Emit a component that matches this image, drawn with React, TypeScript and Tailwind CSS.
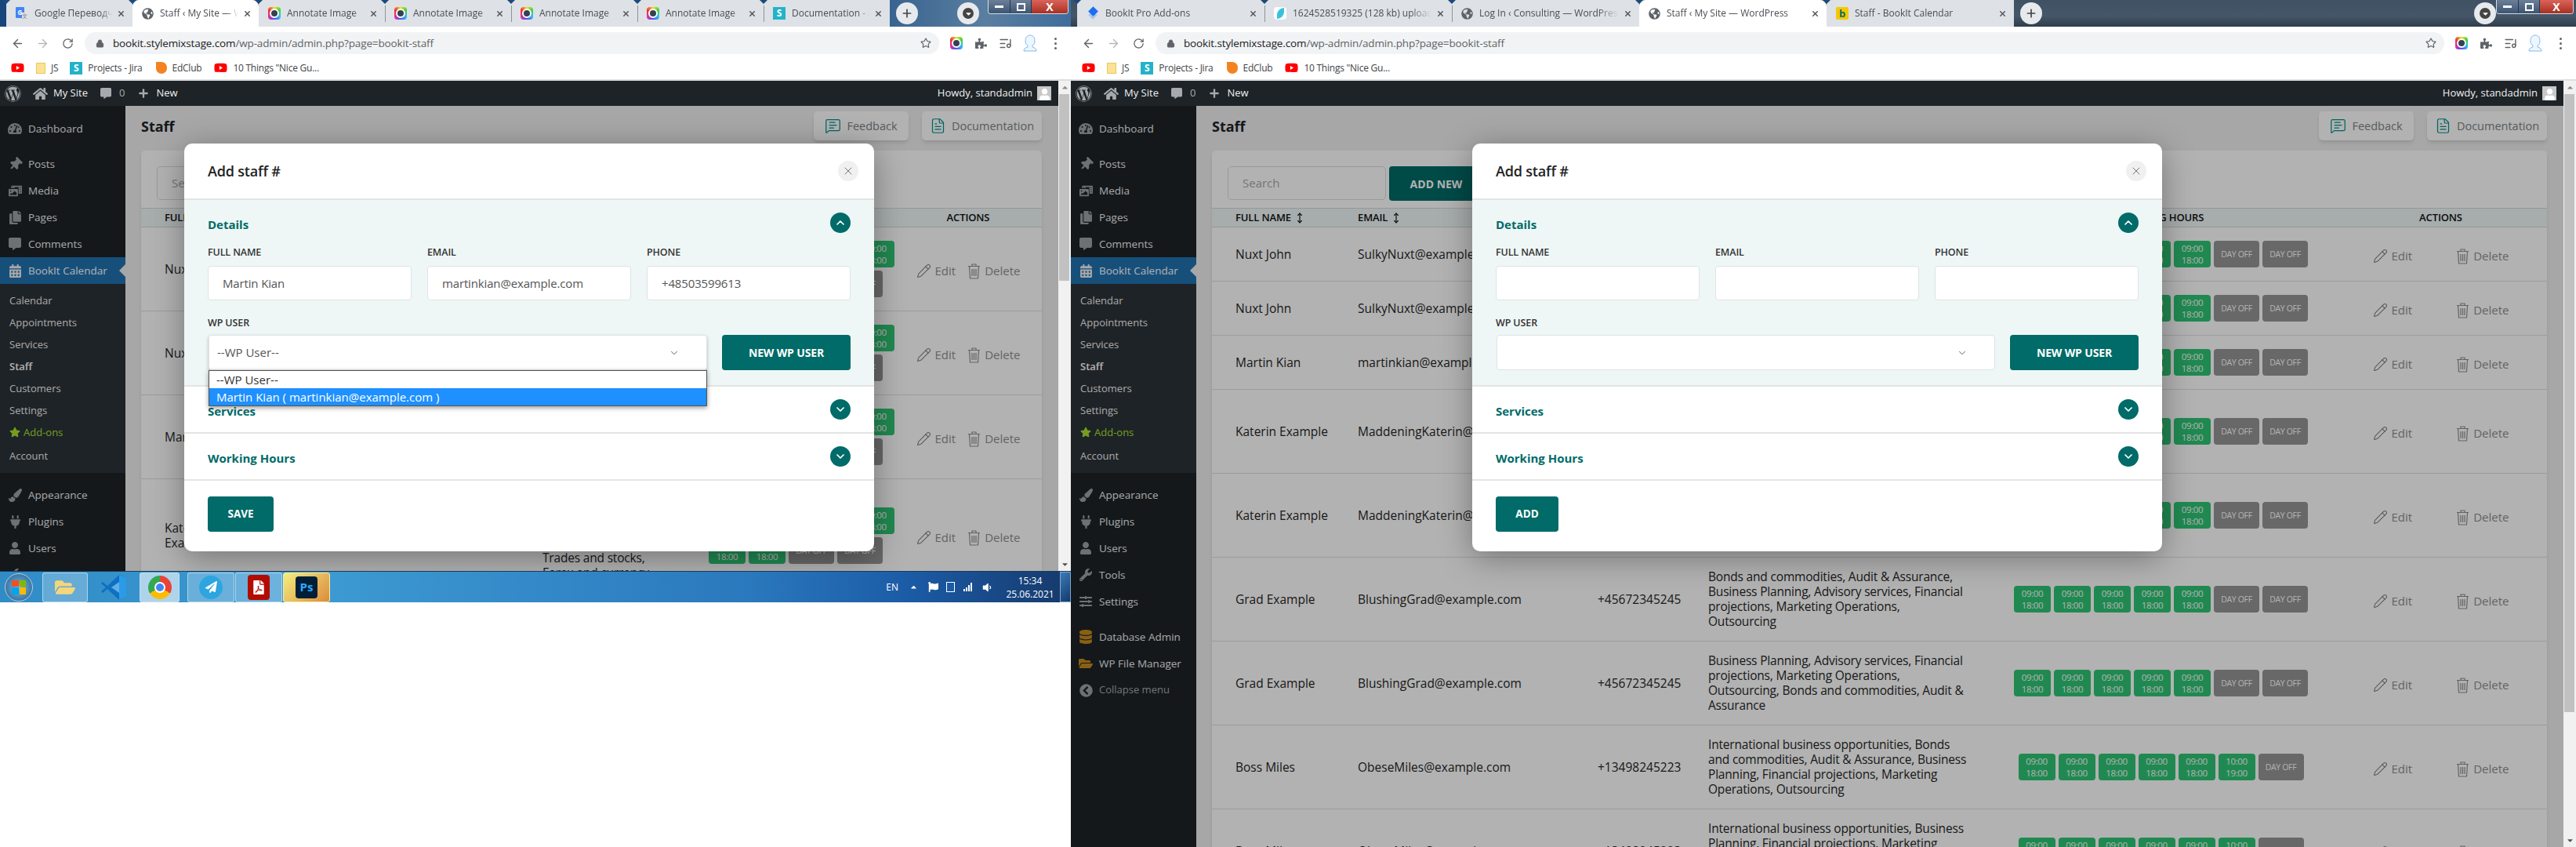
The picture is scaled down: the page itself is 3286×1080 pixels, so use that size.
import React from "react";
import { ArrowLeft, ArrowRight, RotateCw, Lock, Star, ListMusic, X, ChevronDown, ChevronUp, Plus, MessageSquareText, FileText, Pencil, MoveVertical } from "lucide-react";
import { FaWordpress, FaHome, FaCommentAlt, FaPuzzlePiece, FaGlobeAmericas, FaTachometerAlt, FaThumbtack, FaPhotoVideo, FaCopy, FaCalendarAlt, FaStar, FaPaintBrush, FaPlug, FaUser, FaWrench, FaSlidersH, FaDatabase, FaFolderOpen, FaChevronCircleLeft, FaCaretDown, FaYoutube, FaPaperPlane, FaFilePdf, FaFlag, FaVolumeDown, FaCaretUp } from "react-icons/fa";

const Annotate = ({ s = 16 }: { s?: number }) => (
  <span style={{ width: s, height: s }} className="flex shrink-0 items-center justify-center rounded-[4px] bg-[conic-gradient(#f0e030,#40d040,#30c0f0,#5050f0,#e030a0,#f03030,#f0e030)]">
    <span className="h-[70%] w-[70%] rounded-full border-2 border-white bg-[#33424f]" />
  </span>
);

const SJira = () => (
  <span className="flex h-4 w-4 shrink-0 items-center justify-center bg-[#22b3c9] text-[12px] font-bold leading-none text-white">S</span>
);

const GTranslate = () => (
  <span className="relative flex h-4 w-4 shrink-0">
    <span className="flex h-[14px] w-[11px] items-center justify-center rounded-[1px] bg-[#4285f4] text-[8px] font-bold text-white">G</span>
    <span className="absolute bottom-0 right-0 h-[9px] w-[8px] bg-[#dde0e4] text-[7px] leading-[9px] text-[#777]">文</span>
  </span>
);

const Diamond = () => (
  <span className="relative flex h-4 w-4 shrink-0 items-center justify-center">
    <span className="absolute top-[6px] h-[8px] w-[8px] rotate-45 bg-[#a9c4ec]" />
    <span className="absolute top-[1px] h-[9px] w-[9px] rotate-45 bg-[#1a6ef0]" />
  </span>
);

const Bird = () => (
  <span className="flex h-4 w-4 shrink-0 items-center justify-center rounded-sm bg-white">
    <span className="h-[14px] w-[9px] rounded-tl-full rounded-br-full bg-[#35c3dc]" />
  </span>
);

const BookitFav = () => (
  <span className="flex h-4 w-4 shrink-0 items-center justify-center rounded-[2px] bg-[#f5c800] text-[13px] font-bold leading-none text-[#0b6e62]">b</span>
);

const Globe = () => <FaGlobeAmericas size={15} className="shrink-0 text-[#5f6368]" />;

const Avatar = () => (
  <svg width="18" height="22" viewBox="0 0 18 22" fill="#eef6fd" stroke="#7dbcf0" strokeWidth="1" className="ml-[14px] shrink-0">
    <path d="M1 21c0-3 2-4 5-5v-2c-2-1-3-3-3-6 0-4 2-7 6-7s6 3 6 7c0 3-1 5-3 6v2c3 1 5 2 5 5z" />
  </svg>
);

type TabData = { icon: React.ReactNode; title: string; active?: boolean };

function Tab({ tab, wide, sep }: { tab: TabData; wide: boolean; sep: boolean }) {
  return (
    <div className={`relative flex h-full shrink-0 items-center ${wide ? "w-[239px]" : "w-[161px]"} ${tab.active ? "rounded-t-lg bg-white" : "bg-[#dee1e6]"} pl-[12px] pr-[9px]`}>
      {sep && !tab.active && <span className="absolute left-0 top-[7px] h-[21px] w-px bg-[#8f9296]" />}
      <span className="absolute -left-[5px] top-0 z-10 h-0 w-0 border-x-[5px] border-t-[5px] border-x-transparent border-t-[#1d4a7d]" />
      {tab.icon}
      <span className="ml-[8px] min-w-0 flex-1 overflow-hidden whitespace-nowrap text-[12px] leading-[34px] text-[#4a4d52] [mask-image:linear-gradient(90deg,#000_85%,transparent)]">{tab.title}</span>
      <X size={11} strokeWidth={3.2} className="ml-[6px] shrink-0 text-[#54575b]" />
    </div>
  );
}

function WinControls() {
  return (
    <div className="ml-auto mr-[3px] flex h-[18px] w-[103px] self-start overflow-hidden rounded-b-[4px] border border-t-0 border-[#d5dde6]">
      <div className="flex w-[28px] items-center justify-center border-r border-[#26384e] bg-[linear-gradient(180deg,#6c7f98,#3d5573)]"><span className="h-[3px] w-[11px] bg-white" /></div>
      <div className="flex w-[27px] items-center justify-center border-r border-[#26384e] bg-[linear-gradient(180deg,#6c7f98,#3d5573)]"><span className="h-[10px] w-[11px] border-2 border-white" /></div>
      <div className="flex flex-1 items-center justify-center bg-[linear-gradient(180deg,#d9635a,#a92f22)] text-[14px] font-bold leading-none text-white">X</div>
    </div>
  );
}

function TabStrip({ tabs, wide }: { tabs: TabData[]; wide: boolean }) {
  return (
    <div className={`flex h-[34px] shrink-0 items-center ${wide ? "bg-[linear-gradient(180deg,#3f5163_0%,#445668_60%,#2f3e4c_100%)] pl-[8px]" : "bg-[linear-gradient(90deg,#16467a_0%,#1b4c80_75%,#5a7ea0_92%,#3f6d9b_100%)] pl-[8px]"}`}>
      {tabs.map((t, i) => <Tab key={i} tab={t} wide={wide} sep={i > 0 && !tabs[i - 1].active} />)}
      <div className="ml-[8px] flex h-[28px] w-[28px] shrink-0 items-center justify-center rounded-full bg-[#e7eaed]"><Plus size={16} strokeWidth={2.5} className="text-[#444]" /></div>
      <div className={`${wide ? "ml-[551px]" : "ml-[50px]"} flex h-[28px] w-[28px] shrink-0 items-center justify-center rounded-full bg-[#e7eaed]`}>
        <span className="flex h-[14px] w-[14px] items-center justify-center rounded-full bg-[#444]"><FaCaretDown size={11} className="text-white" /></span>
      </div>
      <WinControls />
    </div>
  );
}

function Toolbar() {
  return (
    <div className="flex h-[38px] shrink-0 items-center bg-white pl-[14px] pr-[18px] pt-[4px]">
      <ArrowLeft size={17} className="shrink-0 text-[#5f6368]" />
      <ArrowRight size={17} className="ml-[15px] shrink-0 text-[#b5b8bb]" />
      <RotateCw size={15} className="ml-[16px] shrink-0 text-[#5f6368]" />
      <div className="ml-[14px] flex h-[28px] flex-1 items-center rounded-full bg-[#f1f3f4] pl-[14px] pr-[10px]">
        <Lock size={11} fill="#5f6368" className="shrink-0 text-[#5f6368]" />
        <span className="ml-[11px] whitespace-nowrap text-[13.5px] tracking-[-0.01em] text-[#202124]">bookit.stylemixstage.com<span className="text-[#5f6368]">/wp-admin/admin.php?page=bookit-staff</span></span>
        <Star size={14} className="ml-auto shrink-0 text-[#5f6368]" />
      </div>
      <span className="ml-[14px]"><Annotate /></span>
      <FaPuzzlePiece size={15} className="ml-[16px] shrink-0 text-[#5f6368]" />
      <ListMusic size={17} className="ml-[15px] shrink-0 text-[#5f6368]" />
      <Avatar />
      <span className="ml-[22px] flex flex-col gap-[3px]">
        <span className="h-[3px] w-[3px] rounded-full bg-[#5f6368]" />
        <span className="h-[3px] w-[3px] rounded-full bg-[#5f6368]" />
        <span className="h-[3px] w-[3px] rounded-full bg-[#5f6368]" />
      </span>
    </div>
  );
}

function Bookmarks() {
  const t = "ml-[7px] whitespace-nowrap text-[12px] tracking-[-0.02em] text-[#404346]";
  return (
    <div className="flex h-[31px] shrink-0 items-center border-b-2 border-[#dcdfe2] bg-white pl-[14px]">
      <FaYoutube size={17} className="shrink-0 text-[#f00]" />
      <span className="ml-[15px] h-[14px] w-[12px] shrink-0 border border-[#e8c860] bg-[#fde293]" />
      <span className={t}>JS</span>
      <span className="ml-[15px]"><SJira /></span>
      <span className={t}>Projects - Jira</span>
      <span className="ml-[17px] h-[15px] w-[14px] shrink-0 rounded-b-full rounded-tr-full bg-[#f58220]" />
      <span className={t}>EdClub</span>
      <FaYoutube size={17} className="ml-[16px] shrink-0 text-[#f00]" />
      <span className={t}>10 Things "Nice Gu...</span>
    </div>
  );
}

function AdminBar() {
  return (
    <div className="relative z-0 flex h-8 shrink-0 items-center bg-[#1d2327] pr-[9px] text-[13px] text-[#f0f0f1]">
      <FaWordpress size={21} className="ml-[6px] shrink-0 text-[#a7aaad]" />
      <FaHome size={19} className="ml-[15px] shrink-0 text-[#a7aaad]" />
      <span className="ml-[7px] whitespace-nowrap">My Site</span>
      <FaCommentAlt size={14} className="ml-[16px] shrink-0 text-[#a7aaad]" />
      <span className="ml-[10px] text-[#a7aaad]">0</span>
      <Plus size={16} strokeWidth={3.5} className="ml-[16px] shrink-0 text-[#a7aaad]" />
      <span className="ml-[8px]">New</span>
      <span className="ml-auto whitespace-nowrap">Howdy, standadmin</span>
      <span className="ml-[6px] flex h-[18px] w-[18px] items-end justify-center overflow-hidden bg-[#c8c8c8]"><FaUser size={15} className="text-white" /></span>
    </div>
  );
}

const icon = "shrink-0 text-[#9ca2a7]";
const top1 = [
  { l: "Dashboard", i: <FaTachometerAlt size={18} className={icon} /> },
];
const top2 = [
  { l: "Posts", i: <FaThumbtack size={17} className={`${icon} rotate-45`} /> },
  { l: "Media", i: <FaPhotoVideo size={17} className={icon} /> },
  { l: "Pages", i: <FaCopy size={17} className={icon} /> },
  { l: "Comments", i: <FaCommentAlt size={16} className={icon} /> },
];
const top3 = [
  { l: "Appearance", i: <FaPaintBrush size={17} className={icon} /> },
  { l: "Plugins", i: <FaPlug size={17} className={icon} /> },
  { l: "Users", i: <FaUser size={16} className={icon} /> },
  { l: "Tools", i: <FaWrench size={16} className={icon} /> },
  { l: "Settings", i: <FaSlidersH size={16} className={icon} /> },
];

function MenuItem({ l, i }: { l: string; i: React.ReactNode }) {
  return (
    <div className="flex h-[34px] shrink-0 items-center pl-[9px] text-[13.5px] text-[#f0f0f1]">
      <span className="flex w-[20px] shrink-0 justify-center">{i}</span>
      <span className="ml-[7px] whitespace-nowrap">{l}</span>
    </div>
  );
}

function Sidebar() {
  const sub = ["Calendar", "Appointments", "Services"];
  return (
    <div className="flex w-40 shrink-0 flex-col overflow-hidden bg-[#1d2327] pt-[12px]">
      {top1.map((m) => <MenuItem key={m.l} {...m} />)}
      <div className="h-[11px] shrink-0" />
      {top2.map((m) => <MenuItem key={m.l} {...m} />)}
      <div className="relative flex h-[34px] shrink-0 items-center bg-[#2271b1] pl-[9px] text-[13.5px] text-white">
        <span className="flex w-[20px] justify-center"><FaCalendarAlt size={17} className="text-[#f0f0f1]" /></span>
        <span className="ml-[7px] whitespace-nowrap">BookIt Calendar</span>
        <span className="absolute right-0 top-[9px] h-0 w-0 border-y-[8px] border-r-[8px] border-y-transparent border-r-[#f0f0f1]" />
      </div>
      <div className="flex h-[241px] shrink-0 flex-col bg-[#2c3338] pl-[12px] pt-[7px] text-[13px] leading-[28px] text-[#f0f0f1]">
        {sub.map((s) => <div key={s} className="h-[28px]">{s}</div>)}
        <div className="h-[28px] font-semibold text-white">Staff</div>
        <div className="h-[28px]">Customers</div>
        <div className="h-[28px]">Settings</div>
        <div className="flex h-[28px] items-center text-[#a8e02e]"><FaStar size={14} className="mr-[4px]" />Add-ons</div>
        <div className="mt-[2px] h-[28px]">Account</div>
      </div>
      <div className="h-[11px] shrink-0" />
      {top3.map((m) => <MenuItem key={m.l} {...m} />)}
      <div className="h-[11px] shrink-0" />
      <MenuItem l="Database Admin" i={<FaDatabase size={18} className="shrink-0 text-[#c48a1c]" />} />
      <MenuItem l="WP File Manager" i={<FaFolderOpen size={18} className="shrink-0 text-[#c48a1c]" />} />
      <div className="flex h-[34px] shrink-0 items-center pl-[9px] text-[13px] text-[#a7aaad]">
        <span className="flex w-[20px] shrink-0 justify-center"><FaChevronCircleLeft size={17} className="text-[#9ca2a7]" /></span>
        <span className="ml-[7px] whitespace-nowrap">Collapse menu</span>
      </div>
    </div>
  );
}

const Green = ({ a = "09:00", b = "18:00" }: { a?: string; b?: string }) => (
  <div className="flex h-[34px] w-[47px] shrink-0 flex-col items-center justify-center rounded-[4px] bg-[#2fc575] text-[11.5px] leading-[15px] tracking-[-0.03em] text-white"><span>{a}</span><span>{b}</span></div>
);
const Off = () => (
  <div className="flex h-[34px] w-[58px] shrink-0 items-center justify-center rounded-[4px] bg-[#959595] text-[10.5px] tracking-[-0.03em] text-white">DAY OFF</div>
);

const Trash = () => (
  <svg width="17" height="21" viewBox="0 0 17 21" fill="none" stroke="#8f8f8f" strokeWidth="1.2" className="shrink-0">
    <path d="M1 4.500h15M6 4.500V2h5v2.500M2.500 4.500 3.500 20h10l1-15.500M6 8v9M8.500 8v9M11 8v9" />
  </svg>
);

type RowD = { name: string; email: string; phone: string; svc: string; six?: boolean };

function Row({ r, cols, narrow }: { r: RowD; cols: string; narrow: boolean }) {
  return (
    <div className={`grid ${cols} items-center border-b border-[#e0e0e0] py-[15px] pl-[30px] text-[15.5px] leading-[19px] text-[#262626]`}>
      <div className="pr-[10px]">{r.name}</div>
      <div className="truncate">{r.email}</div>
      <div>{r.phone}</div>
      <div className="overflow-hidden whitespace-pre tracking-[-0.012em]">{r.svc}</div>
      <div className="flex flex-wrap justify-center gap-[4px]">
        {narrow && <><Green /><Green /></>}
        <Green /><Green /><Green /><Green /><Green />
        {r.six ? <><Green a="10:00" b="19:00" /><Off /></> : <><Off /><Off /></>}
      </div>
      <div className={`flex items-center justify-center ${narrow ? "gap-[15px]" : "gap-[56px]"} pt-[4px] text-[15px] text-[#8f8f8f]`}>
        <span className="flex items-center gap-[5px]"><Pencil size={19} strokeWidth={1.3} className="shrink-0 text-[#7d7d7d]" />Edit</span>
        <span className="flex items-center gap-[5px]"><Trash />Delete</span>
      </div>
    </div>
  );
}

const rowsData: RowD[] = [
  { name: "Nuxt John", email: "SulkyNuxt@example.com", phone: "+45672345245", svc: "Bonds and commodities,\nAudit & Assurance" },
  { name: "Nuxt John", email: "SulkyNuxt@example.com", phone: "+45672345245", svc: "Advisory services,\nFinancial projections" },
  { name: "Martin Kian", email: "martinkian@example.com", phone: "+48503599613", svc: "Business Planning,\nAdvisory services" },
  { name: "Katerin Example", email: "MaddeningKaterin@example.com", phone: "+13498245223", svc: "Bonds and commodities, Audit & Assurance,\nBusiness Planning, Advisory services, Financial\nprojections, Marketing Operations,\nOutsourcing" },
  { name: "Katerin Example", email: "MaddeningKaterin@example.com", phone: "+13498245223", svc: "Business Planning, Advisory services, Financial\nprojections, Marketing Operations,\nOutsourcing, Bonds and commodities, Audit &\nAssurance" },
  { name: "Grad Example", email: "BlushingGrad@example.com", phone: "+45672345245", svc: "Bonds and commodities, Audit & Assurance,\nBusiness Planning, Advisory services, Financial\nprojections, Marketing Operations,\nOutsourcing" },
  { name: "Grad Example", email: "BlushingGrad@example.com", phone: "+45672345245", svc: "Business Planning, Advisory services, Financial\nprojections, Marketing Operations,\nOutsourcing, Bonds and commodities, Audit &\nAssurance" },
  { name: "Boss Miles", email: "ObeseMiles@example.com", phone: "+13498245223", svc: "International business opportunities, Bonds\nand commodities, Audit & Assurance, Business\nPlanning, Financial projections, Marketing\nOperations, Outsourcing", six: true },
  { name: "Boss Miles", email: "ObeseMiles@example.com", phone: "+13498245223", svc: "International business opportunities, Business\nPlanning, Financial projections, Marketing\nOperations, Outsourcing,\nAudit & Assurance", six: true },
];

const leftRows: RowD[] = [
  { name: "Nuxt John", email: "SulkyNuxt@example.com", phone: "+45672345245", svc: "Bonds and commodities,\nAudit & Assurance,\nBusiness Planning,\nAdvisory services" },
  { name: "Nuxt John", email: "SulkyNuxt@example.com", phone: "+45672345245", svc: "Advisory services,\nFinancial projections,\nAudit & Assurance,\nOutsourcing" },
  { name: "Martin Kian", email: "martinkian@example.com", phone: "+48503599613", svc: "Business Planning,\nAdvisory services,\nOutsourcing,\nMarketing Operations" },
  { name: "Katerin Example", email: "MaddeningKaterin@example.com", phone: "+13498245223", svc: "Bonds and commodities,\nAudit & Assurance,\nBusiness Planning,\nAdvisory services,\nTrades and stocks,\nForex and currency" },
];

function Main({ narrow }: { narrow: boolean }) {
  const cols = narrow ? "grid-cols-[120px_220px_142px_193px_260px_180px]" : "grid-cols-[156px_306px_141px_350px_455px_259px]";
  const rows = narrow ? leftRows : rowsData;
  const hd = "flex items-center gap-[4px] whitespace-nowrap";
  return (
    <div className="min-w-0 flex-1 bg-[#f0f0f1] pl-[20px] pr-[21px]">
      <div className="flex h-[44px] items-start justify-between pt-[7px]">
        <div className="pt-[7px] text-[18px] font-bold leading-[24px] text-[#1d2327]">Staff</div>
        <div className="flex gap-[17px]">
          <div className="flex h-[37px] w-[121px] items-center justify-center gap-[7px] rounded-[5px] bg-white text-[14.5px] text-[#7d8487] shadow-md"><MessageSquareText size={21} strokeWidth={1.4} className="text-[#008f8a]" />Feedback</div>
          <div className="flex h-[37px] w-[153px] items-center justify-center gap-[7px] rounded-[5px] bg-white text-[14.5px] text-[#7d8487] shadow-md"><FileText size={21} strokeWidth={1.4} className="text-[#008f8a]" />Documentation</div>
        </div>
      </div>
      <div className="mt-[13px] overflow-hidden rounded-t-[5px] bg-white shadow-md">
        <div className="flex h-[73px] items-start gap-[4px] pl-[20px] pt-[20px]">
          <div className="flex h-[43px] w-[202px] items-center rounded-[5px] border border-[#dcdcdc] pl-[18px] text-[15px] text-[#a9a9a9]">Search</div>
          <div className="flex h-[44px] w-[120px] items-center justify-center rounded-[4px] bg-[#006b68] text-[14px] font-bold text-white">ADD NEW</div>
        </div>
        <div className={`grid ${cols} h-[25px] items-center border-y border-[#d3d8d8] bg-[#eff7f6] pl-[30px] text-[13px] font-semibold tracking-[-0.01em] text-[#111]`}>
          <div className={hd}>FULL NAME <MoveVertical size={14} /></div>
          <div className={hd}>EMAIL <MoveVertical size={14} /></div>
          <div className={hd}>PHONE</div>
          <div className={hd}>SERVICES</div>
          <div className={`${hd} justify-center`}>WORKING HOURS</div>
          <div className={`${hd} justify-center`}>ACTIONS</div>
        </div>
        {rows.map((r, i) => <Row key={i} r={r} cols={cols} narrow={narrow} />)}
      </div>
    </div>
  );
}

function Toggle({ up }: { up?: boolean }) {
  return (
    <span className="flex h-[26px] w-[26px] shrink-0 items-center justify-center rounded-full bg-[#006b68]">
      {up ? <ChevronUp size={16} strokeWidth={2.6} className="text-white" /> : <ChevronDown size={16} strokeWidth={2.6} className="text-white" />}
    </span>
  );
}

function Field({ label, value }: { label: string; value?: string }) {
  return (
    <div>
      <div className="h-[17px] text-[12.5px] font-semibold leading-[17px] tracking-[-0.01em] text-[#333]">{label}</div>
      <div className="mt-[9px] flex h-[44px] items-center rounded-[4px] border border-[#dfe3e3] bg-white pl-[18px] text-[15px] tracking-[-0.01em] text-[#555]">{value}</div>
    </div>
  );
}

function Modal({ filled }: { filled: boolean }) {
  const title = "text-[15px] font-bold leading-[20px] text-[#006b68]";
  return (
    <div className="absolute left-1/2 top-[80px] z-20 w-[880px] -translate-x-1/2 rounded-[10px] bg-white shadow-[0_8px_40px_rgba(0,0,0,0.35)]">
      <div className="flex h-[72px] items-center justify-between border-b-2 border-[#e3e5e5] pl-[30px] pr-[20px]">
        <span className="text-[18px] font-semibold tracking-[-0.01em] text-[#222]">Add staff #</span>
        <span className="flex h-[26px] w-[26px] items-center justify-center rounded-full bg-[#f0f0f0]"><X size={16} strokeWidth={1.2} className="text-[#555]" /></span>
      </div>
      <div className="border-b-2 border-[#e3e5e5] bg-[#eff7f6] px-[30px] pb-[19px] pt-[16px]">
        <div className="flex h-[26px] items-start justify-between"><span className={`${title} mt-[5px]`}>Details</span><Toggle up /></div>
        <div className="mt-[16px] grid grid-cols-3 gap-x-[20px]">
          <Field label="FULL NAME" value={filled ? "Martin Kian" : ""} />
          <Field label="EMAIL" value={filled ? "martinkian@example.com" : ""} />
          <Field label="PHONE" value={filled ? "+48503599613" : ""} />
        </div>
        <div className="mt-[20px] h-[17px] text-[12.5px] font-semibold leading-[17px] tracking-[-0.01em] text-[#333]">WP USER</div>
        <div className="mt-[7px] flex gap-[19px]">
          <div className="relative ml-px flex-1">
            <div className={`flex h-[45px] items-center justify-between rounded-[4px] border border-[#dfe3e3] bg-white pl-[10px] pr-[34px] text-[15px] text-[#555] ${filled ? "shadow-[0_2px_4px_rgba(0,0,0,0.25)]" : ""}`}>
              <span>{filled ? "--WP User--" : ""}</span>
              <ChevronDown size={14} strokeWidth={1.6} className="text-[#555]" />
            </div>
            {filled && (
              <div className="absolute left-0 right-0 top-[45px] z-30 border border-[#555] bg-white text-[15px] leading-[22px] text-[#333] shadow-[0_2px_6px_rgba(0,0,0,0.4)]">
                <div className="h-[22px] pl-[9px]">--WP User--</div>
                <div className="h-[22px] bg-[#1e90ff] pl-[9px] text-white">Martin Kian ( martinkian@example.com )</div>
              </div>
            )}
          </div>
          <div className="flex h-[45px] w-[164px] items-center justify-center rounded-[4px] bg-[#006b68] text-[14px] font-bold tracking-[-0.01em] text-white">NEW WP USER</div>
        </div>
      </div>
      <div className="flex h-[60px] items-start justify-between border-b-2 border-[#e3e5e5] px-[30px] pt-[16px]"><span className={`${title} mt-[5px]`}>Services</span><Toggle /></div>
      <div className="flex h-[60px] items-start justify-between border-b-2 border-[#e3e5e5] px-[30px] pt-[16px]"><span className={`${title} mt-[5px]`}>Working Hours</span><Toggle /></div>
      <div className="px-[30px] pb-[25px] pt-[20px]">
        <div className={`flex h-[45px] items-center justify-center rounded-[4px] bg-[#006b68] text-[13.5px] font-bold text-white ${filled ? "w-[84px]" : "w-[80px]"}`}>{filled ? "SAVE" : "ADD"}</div>
      </div>
    </div>
  );
}

function Scrollbar({ thumb }: { thumb: string }) {
  return (
    <div className="flex w-4 shrink-0 flex-col bg-[#f1f1f1]">
      <div className="flex h-[17px] shrink-0 items-center justify-center"><FaCaretUp size={11} className="text-[#8a8a8a]" /></div>
      <div className={`${thumb} ml-px mr-[2px] shrink-0 bg-[#c1c1c1]`} />
      <div className="mb-[2px] mt-auto flex h-[14px] shrink-0 items-center justify-center"><FaCaretDown size={11} className="text-[#505050]" /></div>
    </div>
  );
}

function WpArea({ narrow }: { narrow: boolean }) {
  return (
    <div className="flex min-h-0 flex-1">
      <div className="relative flex min-w-0 flex-1 flex-col overflow-hidden">
        <AdminBar />
        <div className="flex min-h-0 flex-1">
          <Sidebar />
          <Main narrow={narrow} />
        </div>
        <div className="absolute inset-x-0 bottom-0 top-8 z-10 bg-black/30" />
        <Modal filled={narrow} />
      </div>
      <Scrollbar thumb={narrow ? "h-[238px]" : "h-[788px]"} />
    </div>
  );
}

function TaskBtn({ children, hi, w }: { children: React.ReactNode; hi?: boolean; w: string }) {
  return (
    <div className={`flex h-[38px] ${w} shrink-0 items-center justify-center rounded-[3px] border border-[#cfe4f2]/70 ${hi ? "bg-white/60" : "bg-white/25"}`}>{children}</div>
  );
}

function Taskbar() {
  return (
    <div className="flex h-10 shrink-0 items-center border-t border-[#163a5f] bg-[linear-gradient(90deg,#2f8cc6_0%,#3d9ad2_30%,#2a78bd_70%,#1b5ba6_85%,#16396a_100%)] pl-[6px]">
      <div className="flex h-[36px] w-[36px] shrink-0 items-center justify-center rounded-full border border-[#bcd] bg-[radial-gradient(circle,#7db8de,#1d5c8e)]">
        <span className="grid h-[18px] w-[18px] grid-cols-2 gap-px">
          <span className="bg-[#f25022]" /><span className="bg-[#7fba00]" /><span className="bg-[#00a4ef]" /><span className="bg-[#ffb900]" />
        </span>
      </div>
      <div className="ml-[12px] flex gap-px">
        <TaskBtn w="w-[58px]"><FaFolderOpen size={26} className="text-[#f5d67a]" /></TaskBtn>
        <div className="flex h-[38px] w-[64px] shrink-0 items-center justify-center">
          <svg width="32" height="34" viewBox="0 0 32 34"><path d="M23 1 8 15 2 10 0 12l6 5-6 5 2 2 6-5 15 14 9-4V5z" fill="#0f6fc0" /><path d="M23 1v32l9-4V5z" fill="#2b9be8" /><path d="M23 10 13 17l10 7z" fill="#5fb0e8" /></svg>
        </div>
        <TaskBtn hi w="w-[51px]">
          <span className="h-[30px] w-[30px] rounded-full bg-[conic-gradient(#ea4335_0deg_120deg,#fbbc05_120deg_240deg,#34a853_240deg_360deg)] p-[8px]"><span className="block h-full w-full rounded-full border-2 border-white bg-[#4285f4]" /></span>
        </TaskBtn>
        <div className="w-[8px]" />
        <TaskBtn w="w-[60px]"><span className="flex h-[30px] w-[30px] items-center justify-center rounded-full bg-[#2ca5e0]"><FaPaperPlane size={15} className="text-white" /></span></TaskBtn>
        <TaskBtn w="w-[60px]"><span className="flex h-[32px] w-[28px] items-center justify-center rounded-[4px] bg-[#b30b00]"><FaFilePdf size={18} className="text-white" /></span></TaskBtn>
        <div className="flex h-[38px] w-[60px] shrink-0 items-center justify-center rounded-[3px] border border-[#f5eea0] bg-[linear-gradient(135deg,#f3ee7e,#dd8b3f)]">
          <span className="flex h-[28px] w-[28px] items-center justify-center rounded-[4px] bg-[#001e36] text-[15px] font-bold text-[#31a8ff]">Ps</span>
        </div>
      </div>
      <div className="ml-auto flex h-full items-center text-white">
        <span className="text-[12px]">EN</span>
        <FaCaretUp size={11} className="ml-[14px]" />
        <FaFlag size={13} className="ml-[13px]" />
        <span className="ml-[10px] h-[13px] w-[11px] border border-white bg-[#1b5ba6]" />
        <span className="ml-[11px] flex items-end gap-px">
          <span className="h-[3px] w-[2px] bg-white" /><span className="h-[5px] w-[2px] bg-white" /><span className="h-[8px] w-[2px] bg-white" /><span className="h-[11px] w-[2px] bg-white" />
        </span>
        <FaVolumeDown size={14} className="ml-[12px]" />
        <div className="ml-[20px] flex w-[56px] flex-col items-center text-[12px] leading-[17px]"><span>15:34</span><span className="whitespace-nowrap">25.06.2021</span></div>
        <div className="ml-[10px] h-full w-[14px] border border-[#7fa6cc] bg-[linear-gradient(135deg,#3c7ab8,#123a6c)]" />
      </div>
    </div>
  );
}

const leftTabs: TabData[] = [
  { icon: <GTranslate />, title: "Google Переводчик" },
  { icon: <Globe />, title: "Staff ‹ My Site — WordPress", active: true },
  { icon: <Annotate />, title: "Annotate Image" },
  { icon: <Annotate />, title: "Annotate Image" },
  { icon: <Annotate />, title: "Annotate Image" },
  { icon: <Annotate />, title: "Annotate Image" },
  { icon: <SJira />, title: "Documentation - Atlassian" },
];

const rightTabs: TabData[] = [
  { icon: <Diamond />, title: "BookIt Pro Add-ons" },
  { icon: <Bird />, title: "1624528519325 (128 kb) uploaded" },
  { icon: <Globe />, title: "Log In ‹ Consulting — WordPress" },
  { icon: <Globe />, title: "Staff ‹ My Site — WordPress", active: true },
  { icon: <BookitFav />, title: "Staff - BookIt Calendar" },
];

export default function App() {
  return (
    <div className="flex h-[1080px] w-[3286px] overflow-hidden bg-white font-['Open_Sans',sans-serif]">
      <div className="flex h-[768px] w-[1366px] shrink-0 flex-col overflow-hidden">
        <TabStrip tabs={leftTabs} wide={false} />
        <Toolbar />
        <Bookmarks />
        <WpArea narrow />
        <Taskbar />
      </div>
      <div className="flex h-[1080px] w-[1920px] shrink-0 flex-col overflow-hidden">
        <TabStrip tabs={rightTabs} wide />
        <Toolbar />
        <Bookmarks />
        <WpArea narrow={false} />
      </div>
    </div>
  );
}
